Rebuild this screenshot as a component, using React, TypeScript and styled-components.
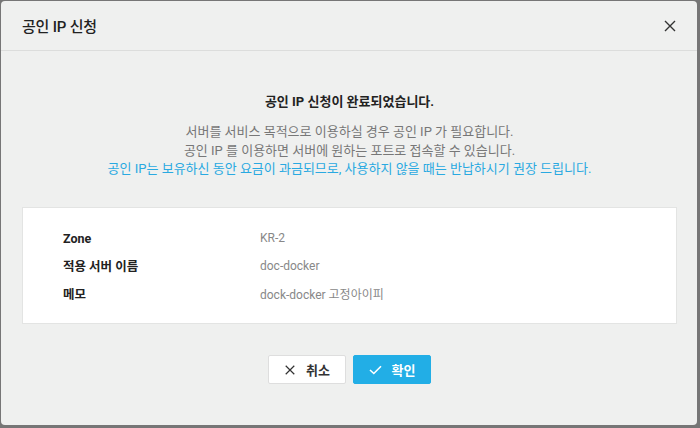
import React from 'react';
import styled, {createGlobalStyle} from 'styled-components';

const GlobalStyle = createGlobalStyle`
  html, body {
    margin: 0;
    padding: 0;
    background: #767676;
    font-family: Roboto, "Noto Sans CJK KR", sans-serif;
  }
`;

const Screen = styled.div`
  width: 700px;
  height: 428px;
  padding: 1px 3px 3px 1px;
  box-sizing: border-box;
  display: flex;
`;

const Modal = styled.div`
  flex: 1;
  display: flex;
  flex-direction: column;
  background: #eff0ef;
  border-radius: 4px;
  overflow: hidden;
`;

const Header = styled.div`
  height: 49px;
  display: flex;
  align-items: center;
  justify-content: space-between;
  padding: 0 20px 0 21px;
  border-bottom: 1px solid #dcdddc;
`;

const Title = styled.h1`
  margin: 0;
  font-size: 15px;
  font-weight: 500;
  color: #222;
  letter-spacing: -0.2px;
`;

const CloseButton = styled.button`
  border: none;
  background: none;
  padding: 0;
  width: 14px;
  height: 14px;
  display: flex;
  cursor: pointer;
`;

const Body = styled.div`
  flex: 1;
  display: flex;
  flex-direction: column;
  align-items: center;
  padding: 40px 20px 0 21px;
`;

const Headline = styled.p`
  margin: 0;
  font-size: 13px;
  font-weight: 700;
  color: #222;
`;

const Notice = styled.div`
  margin-top: 13px;
  text-align: center;
  font-size: 13px;
  line-height: 18.5px;
  color: #777;
`;

const Warn = styled.span`
  color: #29a9e1;
`;

const Card = styled.div`
  align-self: stretch;
  margin-top: 28px;
  background: #fff;
  border: 1px solid #e3e4e3;
  padding: 17px 40px 16px 40px;
  display: grid;
  grid-template-columns: 197px 1fr;
  grid-auto-rows: 27.5px;
  align-items: center;
`;

const Label = styled.div`
  font-size: 12.5px;
  font-weight: 700;
  color: #222;
`;

const Value = styled.div`
  font-size: 12px;
  color: #888;
`;

const Actions = styled.div`
  margin-top: 31px;
  display: flex;
  gap: 7px;
`;

const Button = styled.button<{$primary?: boolean}>`
  width: 78px;
  height: 29px;
  display: flex;
  align-items: center;
  justify-content: center;
  gap: 10px;
  border-radius: 2px;
  font-family: inherit;
  font-size: 13px;
  font-weight: 700;
  cursor: pointer;
  border: 1px solid ${p => (p.$primary ? '#22aee6' : '#dedede')};
  background: ${p => (p.$primary ? '#22aee6' : '#fff')};
  color: ${p => (p.$primary ? '#fff' : '#333')};
`;

const XIcon = ({size, color}: {size: number; color: string}) => (
  <svg width={size} height={size} viewBox="0 0 14 14">
    <path d="M2 2 L12 12 M12 2 L2 12" stroke={color} strokeWidth="1.4" fill="none" />
  </svg>
);

const CheckIcon = () => (
  <svg width="13" height="10" viewBox="0 0 13 10">
    <path d="M1 5 L4.8 8.5 L12 1.2" stroke="#fff" strokeWidth="1.6" fill="none" />
  </svg>
);

const rows = [
  {label: 'Zone', value: 'KR-2'},
  {label: '적용 서버 이름', value: 'doc-docker'},
  {label: '메모', value: 'dock-docker 고정아이피'},
];

const App = () => {
  return (
    <Screen>
      <GlobalStyle />
      <Modal>
        <Header>
          <Title>공인 IP 신청</Title>
          <CloseButton aria-label="닫기">
            <XIcon size={14} color="#333" />
          </CloseButton>
        </Header>
        <Body>
          <Headline>공인 IP 신청이 완료되었습니다.</Headline>
          <Notice>
            서버를 서비스 목적으로 이용하실 경우 공인 IP 가 필요합니다.
            <br />
            공인 IP 를 이용하면 서버에 원하는 포트로 접속할 수 있습니다.
            <br />
            <Warn>공인 IP는 보유하신 동안 요금이 과금되므로, 사용하지 않을 때는 반납하시기 권장 드립니다.</Warn>
          </Notice>
          <Card>
            {rows.map(r => (
              <React.Fragment key={r.label}>
                <Label>{r.label}</Label>
                <Value>{r.value}</Value>
              </React.Fragment>
            ))}
          </Card>
          <Actions>
            <Button>
              <XIcon size={12} color="#333" />
              취소
            </Button>
            <Button $primary>
              <CheckIcon />
              확인
            </Button>
          </Actions>
        </Body>
      </Modal>
    </Screen>
  );
};

export default App;
